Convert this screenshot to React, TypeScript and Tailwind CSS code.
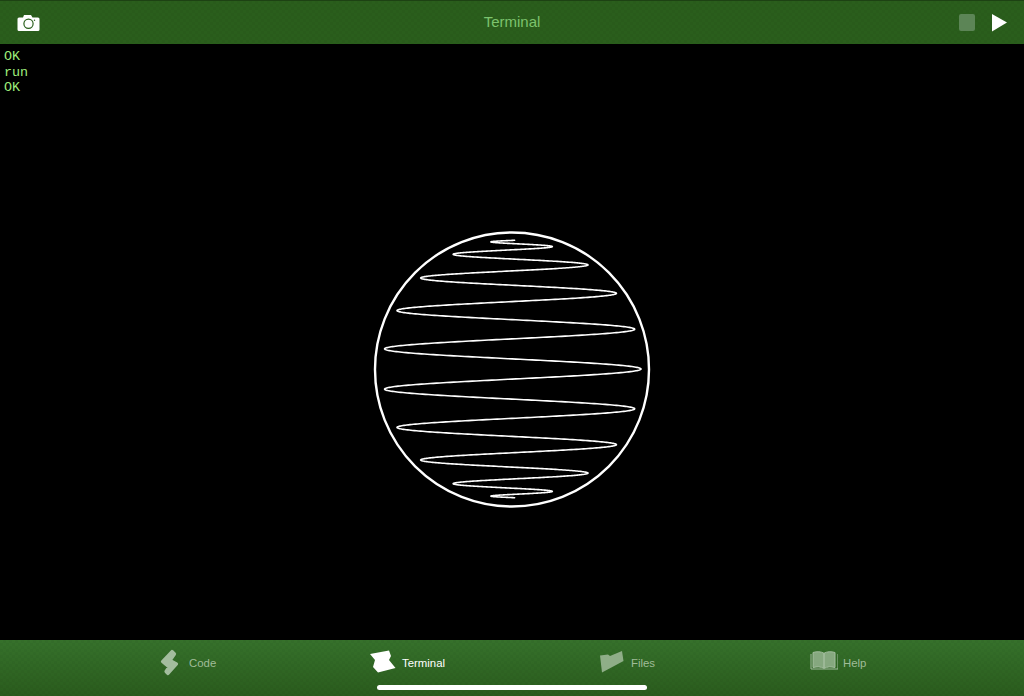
import React from 'react';

// sphere wire curve: lat step of 9deg per half turn, runs from top to bottom
function spiralPath() {
  const points: string[] = [];
  const cx = 512;
  const cy = 369;
  const r = 129;
  for (let i = -9.65; i <= 9.65; i += 0.01) {
    const lat = (i * 9 * Math.PI) / 180;
    const x = cx + r * Math.cos(lat) * Math.cos(Math.PI * i);
    const y = cy + r * Math.sin(lat);
    points.push(`${x.toFixed(2)} ${y.toFixed(2)}`);
  }
  return 'M' + points.join('L');
}

const tabs = [
  { label: 'Code', box: 'w-[56px] gap-[10px]' },
  { label: 'Terminal', box: 'w-[76px] gap-[6px]', active: true },
  { label: 'Files', box: 'w-[56px] gap-[7px]' },
  { label: 'Help', box: 'w-[57px] gap-[5px]' },
];

function TabIcon({ label }: { label: string }) {
  if (label === 'Code') {
    return (
      <svg width="19" height="28" viewBox="160 649 19 28" className="shrink-0 text-[#a3bd9e]">
        <polygon
          points="172,651.5 174.5,654 170,660.5 176.5,664 168,673.5 166,671.5 169,667 162.5,661.5"
          fill="currentColor"
          stroke="currentColor"
          strokeWidth="3.2"
          strokeLinejoin="round"
        />
      </svg>
    );
  }
  if (label === 'Terminal') {
    return (
      <svg width="26" height="28" viewBox="370 649 26 28" className="shrink-0 text-white">
        <polygon
          points="370,654 389,650.5 391,656 389,660 395.5,668 378,672.5 373,667 375,660"
          fill="currentColor"
        />
      </svg>
    );
  }
  if (label === 'Files') {
    return (
      <svg width="24" height="28" viewBox="600 649 24 28" className="shrink-0 text-[#8fae88]">
        <polygon
          points="600,655.5 608,654.5 610,656 622,651 623.5,661 602,672.5"
          fill="currentColor"
        />
      </svg>
    );
  }
  return (
    <svg width="28" height="28" viewBox="810 649 28 28" fill="none" className="shrink-0 text-[#a3bd9e]">
      <path d="M811 654v15h27v-15" stroke="currentColor" strokeWidth="1" />
      <path
        d="M813 652.5c4-1.2 8-1 11 .8v15c-3-1.6-7-1.8-11-.8zM824 653.3c3-1.8 7-2 11-.8v15c-4-1-8-.8-11 .8z"
        fill="currentColor"
        fillOpacity="0.75"
        stroke="currentColor"
        strokeWidth="1"
      />
    </svg>
  );
}

export default function App() {
  return (
    <div className="relative flex h-[696px] w-[1024px] flex-col overflow-hidden bg-black font-['Liberation_Sans',sans-serif]">
      <header className="flex h-[44px] shrink-0 items-center border-t border-[#1d4213] bg-[#2a5e1c] bg-[conic-gradient(rgba(0,0,0,0.03)_25%,transparent_0_50%,rgba(0,0,0,0.03)_0_75%,transparent_0)] bg-[length:6px_6px] px-[17px]">
        <div className="flex flex-1 items-center">
          <svg width="23" height="18" viewBox="0 0 23 18">
            <path
              d="M2 3.5h4l1-2.5h7l1.5 2.5H21a1.5 1.5 0 0 1 1.5 1.5v10.5A1.5 1.5 0 0 1 21 17H2a1.5 1.5 0 0 1-1.5-1.5V5A1.5 1.5 0 0 1 2 3.5z"
              fill="#fff"
            />
            <circle cx="11.5" cy="9.8" r="4.6" fill="#fff" stroke="#2a5f1c" strokeWidth="1.2" />
            <circle cx="17.5" cy="6.3" r="0.7" fill="#2a5f1c" />
          </svg>
        </div>
        <span className="text-[15px] text-[#7cc36d]">Terminal</span>
        <div className="flex flex-1 items-center justify-end gap-[17px]">
          <div className="h-[17px] w-[16px] rounded-[2px] bg-[#5c8556]" />
          <svg width="15" height="18" viewBox="0 0 15 18">
            <polygon points="0,0 15,8.5 0,17.5" fill="#fff" />
          </svg>
        </div>
      </header>

      <main className="relative flex-1 bg-black">
        <pre className="pl-[4px] pt-[5px] font-['Liberation_Mono',monospace] text-[13.4px] leading-[15.5px] text-[#9fef7c]">
          {'OK\nrun\nOK'}
        </pre>
        <svg className="absolute inset-0 h-full w-full" viewBox="0 44 1024 596" fill="none">
          <circle cx="512" cy="369.5" r="137" stroke="#fff" strokeWidth="2.4" />
          <path d={spiralPath()} stroke="#fff" strokeWidth="1.6" strokeLinejoin="round" />
        </svg>
      </main>

      <nav className="flex h-[56px] shrink-0 items-center justify-center gap-[154px] bg-[#2e6522] bg-[conic-gradient(rgba(0,0,0,0.03)_25%,transparent_0_50%,rgba(0,0,0,0.03)_0_75%,transparent_0),linear-gradient(#36712b,#2a5c1d)] bg-[length:6px_6px,100%_100%] pb-[10px] pl-[3px]">
        {tabs.map((tab) => (
          <div key={tab.label} className={`flex items-center ${tab.box}`}>
            <TabIcon label={tab.label} />
            <span className={`pt-[1px] text-[11.4px] ${tab.active ? 'text-white' : 'text-[#a0bc98]'}`}>
              {tab.label}
            </span>
          </div>
        ))}
      </nav>

      <div className="absolute bottom-[6px] left-[377px] h-[5px] w-[270px] rounded-full bg-white" />
    </div>
  );
}
